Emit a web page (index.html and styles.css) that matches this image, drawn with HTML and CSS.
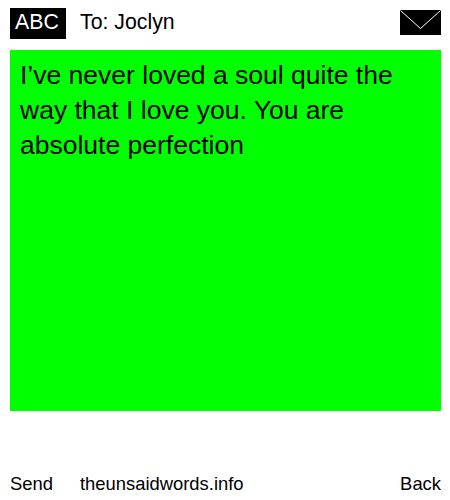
FILE: index.html
```html
<!DOCTYPE html>
<html lang="en">
<head>
    <meta charset="UTF-8">
    <title>The Unsaid Words</title>
    <link rel="stylesheet" href="styles.css">
</head>
<body>
    <div class="page">
        <header class="top">
            <div class="abc">ABC</div>
            <div class="to">To: Joclyn</div>
            <svg class="envelope" width="41" height="25" viewBox="0 0 41 25">
                <rect width="41" height="25" fill="#000"/>
                <path d="M0.5 0.5 L20.5 18.5 L40.5 0.5" fill="none" stroke="#fff" stroke-width="1"/>
            </svg>
        </header>
        <div class="message">I’ve never loved a soul quite the way that I love you. You are absolute perfection</div>
        <footer class="bottom">
            <span class="send">Send</span>
            <span class="site">theunsaidwords.info</span>
            <span class="back">Back</span>
        </footer>
    </div>
</body>
</html>
```

FILE: styles.css
```css
html, body {
    margin: 0;
    padding: 0;
    background: #fff;
}

body {
    font-family: "Liberation Sans", Arial, sans-serif;
    color: #000;
}

.page {
    width: 431px;
    height: 500px;
    padding: 0 9px 0 10px;
    display: flex;
    flex-direction: column;
}

.top {
    display: flex;
    align-items: center;
    height: 31px;
    margin-top: 8px;
}

.abc {
    width: 51px;
    height: 31px;
    padding-left: 5px;
    line-height: 29px;
    background: #000;
    color: #fff;
    font-size: 21.3px;
}

.to {
    margin-left: 14px;
    padding-bottom: 2px;
    font-size: 21.3px;
    flex: 1;
}

.envelope {
    display: block;
    margin-top: -3px;
}

.message {
    margin-top: 11px;
    height: 353px;
    padding: 8px 10px 0 10px;
    background: #0f0;
    font-size: 26.5px;
    line-height: 35px;
}

.bottom {
    display: flex;
    margin-top: 61px;
    font-size: 18.4px;
    line-height: 24px;
}

.site {
    margin-left: 27px;
    flex: 1;
}
```
